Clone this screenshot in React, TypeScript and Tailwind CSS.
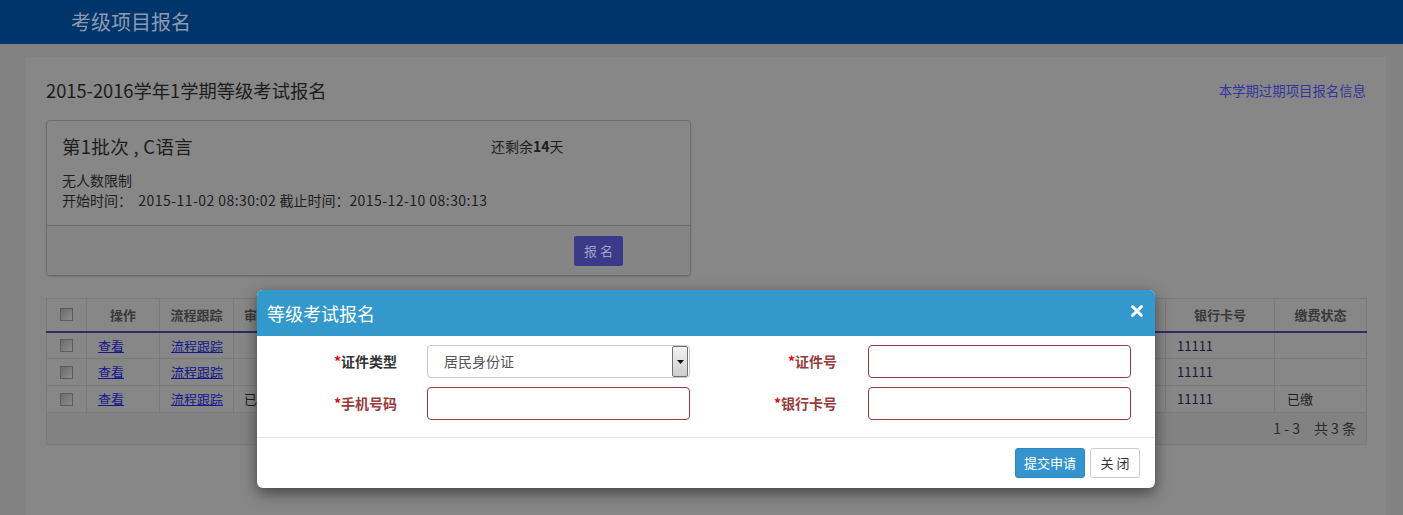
import React from "react";

const Checkbox = () => (
  <div className="mx-auto w-[13px] h-[13px] border border-[#5c5c5c] bg-gradient-to-br from-[#6a6a6a] to-[#8e8e8e]" />
);

const hiddenCols = ["审核状态", "", "", "", "", ""];

const rows = [
  { audit: "", pay: "" },
  { audit: "", pay: "" },
  { audit: "已审核", pay: "已缴" },
];

export default function App() {
  return (
    <div className="relative h-[515px] overflow-hidden bg-[#828282] font-['Noto_Sans_CJK_SC','Microsoft_YaHei',sans-serif]">
      <header className="h-[44px] bg-[#00356b] flex items-center pl-[71px]">
        <span className="text-[20px] leading-none text-[#8c9ab0]">考级项目报名</span>
      </header>

      <div className="ml-[26px] mr-[17px] mt-[13px] h-[600px] bg-[#878787] px-[20px] pt-[21px]">
        <div className="flex items-center justify-between h-[24px]">
          <h1 className="text-[18.3px] leading-[24px] text-[#1c1c1c]">2015-2016学年1学期等级考试报名</h1>
          <a className="text-[13.4px] text-[#3535a0]">本学期过期项目报名信息</a>
        </div>

        <div className="mt-[18px] w-[645px] border border-[#6c6c6c] rounded-[4px] shadow-[0_1px_2px_rgba(0,0,0,0.15)]">
          <div className="px-[15px] pt-[13px] pb-[15px]">
            <div className="flex items-center h-[24px]">
              <div className="w-[429px] text-[18.5px] leading-[24px] text-[#1e1e1e] tracking-[0.3px]">第1批次 , C语言</div>
              <div className="text-[14px] text-[#1e1e1e]">
                还剩余<span className="font-bold">14</span>天
              </div>
            </div>
            <div className="mt-[12px] text-[14px] leading-[20px] text-[#1e1e1e]">无人数限制</div>
            <div className="text-[14px] leading-[20px] text-[#1e1e1e] whitespace-pre">
              开始时间：  <span className="tracking-[0.45px]">2015-11-02 08:30:02</span> 截止时间：<span className="tracking-[0.45px]">2015-12-10 08:30:13</span>
            </div>
          </div>
          <div className="border-t border-[#6c6c6c] bg-[#858585] h-[50px] flex items-center justify-end pr-[67px] rounded-b-[4px]">
            <button className="w-[49px] h-[30px] bg-[#3a3a88] rounded-[2px] text-[13px] text-[#a0a0c4] tracking-[3px] pl-[3px]">
              报名
            </button>
          </div>
        </div>

        <table className="mt-[22px] w-[1320px] table-fixed border-collapse text-[13px]">
          <colgroup>
            <col className="w-[40px]" />
            <col className="w-[73px]" />
            <col className="w-[74px]" />
            <col className="w-[100px]" />
            <col className="w-[140px]" />
            <col className="w-[150px]" />
            <col className="w-[150px]" />
            <col className="w-[200px]" />
            <col className="w-[192px]" />
            <col className="w-[109px]" />
            <col className="w-[92px]" />
          </colgroup>
          <thead>
            <tr className="h-[33px] border-b-2 border-b-[#2c2c6c]">
              <th className="border border-[#7a7a7a] border-b-[#2c2c6c]"><Checkbox /></th>
              <th className="border border-[#7a7a7a] border-b-[#2c2c6c] font-bold text-[#3a3a3a]">操作</th>
              <th className="border border-[#7a7a7a] border-b-[#2c2c6c] font-bold text-[#3a3a3a]">流程跟踪</th>
              {hiddenCols.map((c, i) => (
                <th key={i} className="border border-[#7a7a7a] border-b-[#2c2c6c] font-bold text-[#3a3a3a] text-left pl-[10px]">{c}</th>
              ))}
              <th className="border border-[#7a7a7a] border-b-[#2c2c6c] font-bold text-[#3a3a3a]">银行卡号</th>
              <th className="border border-[#7a7a7a] border-b-[#2c2c6c] font-bold text-[#3a3a3a]">缴费状态</th>
            </tr>
          </thead>
          <tbody>
            {rows.map((r, i) => (
              <tr key={i} className="h-[27px]">
                <td className="border border-[#7a7a7a]"><Checkbox /></td>
                <td className="border border-[#7a7a7a] pl-[11px]"><a className="underline text-[#18188c]">查看</a></td>
                <td className="border border-[#7a7a7a] pl-[11px]"><a className="underline text-[#18188c]">流程跟踪</a></td>
                <td className="border border-[#7a7a7a] pl-[10px] text-[#1e1e1e]">{r.audit}</td>
                <td className="border border-[#7a7a7a]" />
                <td className="border border-[#7a7a7a]" />
                <td className="border border-[#7a7a7a]" />
                <td className="border border-[#7a7a7a]" />
                <td className="border border-[#7a7a7a]" />
                <td className="border border-[#7a7a7a] pl-[11px] text-[#1a1a38]">11111</td>
                <td className="border border-[#7a7a7a] pl-[12px] text-[#1e1e1e]">{r.pay}</td>
              </tr>
            ))}
            <tr className="h-[32px] bg-[#828282]">
              <td colSpan={11} className="border border-[#7a7a7a] text-right pr-[10px] text-[14px] text-[#2a2a2a]">
                1 - 3<span className="ml-[14px]">共 3 条</span>
              </td>
            </tr>
          </tbody>
        </table>
      </div>

      {/* Modal */}
      <div className="absolute left-[257px] top-[290px] w-[898px] rounded-[6px] bg-white shadow-[0_5px_15px_rgba(0,0,0,0.5)] overflow-hidden">
        <div className="h-[46px] bg-[#3399cc] flex items-center justify-between pl-[10px] pr-[12px]">
          <span className="text-[18px] text-white">等级考试报名</span>
          <svg width="12" height="12" viewBox="0 0 12 12" className="mb-[4px]">
            <path d="M1.5 1.5L10.5 10.5M10.5 1.5L1.5 10.5" stroke="#fff" strokeWidth="3" strokeLinecap="round" />
          </svg>
        </div>
        <div className="pt-[9px] pb-[17px] flex flex-col gap-[9px]">
          <div className="flex items-center">
            <label className="w-[140px] text-right text-[14px] font-bold text-[#333]">
              <span className="text-[#e00]">*</span>证件类型
            </label>
            <div className="ml-[30px] w-[263px] h-[33px] border border-[#c8c8c8] rounded-[4px] flex items-center justify-between">
              <span className="pl-[16px] text-[14px] text-[#555]">居民身份证</span>
              <div className="mr-[1px] w-[16px] h-[31px] border border-[#707070] rounded-[2px] bg-gradient-to-b from-[#f2f2f2] to-[#cfcfcf] flex items-center justify-center">
                <svg width="7" height="4" viewBox="0 0 7 4"><path d="M0 0h7L3.5 4z" fill="#111" /></svg>
              </div>
            </div>
            <label className="w-[147px] text-right text-[14px] font-bold text-[#963c3c]">
              <span className="text-[#e00]">*</span>证件号
            </label>
            <div className="ml-[31px] w-[263px] h-[33px] border border-[#963c3c] rounded-[4px]" />
          </div>
          <div className="flex items-center">
            <label className="w-[140px] text-right text-[14px] font-bold text-[#963c3c]">
              <span className="text-[#e00]">*</span>手机号码
            </label>
            <div className="ml-[30px] w-[263px] h-[33px] border border-[#963c3c] rounded-[4px]" />
            <label className="w-[147px] text-right text-[14px] font-bold text-[#963c3c]">
              <span className="text-[#e00]">*</span>银行卡号
            </label>
            <div className="ml-[31px] w-[263px] h-[33px] border border-[#963c3c] rounded-[4px]" />
          </div>
        </div>
        <div className="border-t border-[#e5e5e5] h-[51px] flex items-center justify-end gap-[5px] pr-[15px]">
          <button className="w-[70px] h-[30px] rounded-[3px] bg-[#3593cd] border border-[#2d86bf] text-white text-[13px]">提交申请</button>
          <button className="w-[50px] h-[30px] rounded-[3px] bg-white border border-[#cccccc] text-[#333] text-[13px] tracking-[3px] pl-[3px]">关闭</button>
        </div>
      </div>
    </div>
  );
}
